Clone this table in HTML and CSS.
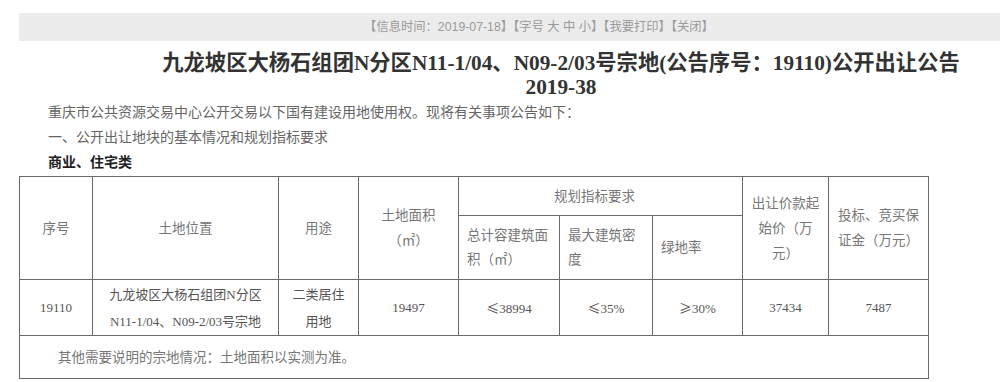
FILE: index.html
```html
<!DOCTYPE html>
<html lang="zh-CN">
<head>
<meta charset="utf-8">
<title>公开出让公告</title>
<link rel="stylesheet" href="styles.css">
</head>
<body>
<div class="page">
  <div class="topbar">【信息时间：2019-07-18】【字号 大 中 小】【我要打印】【关闭】</div>
  <h1 class="title">九龙坡区大杨石组团N分区N11-1/04、N09-2/03号宗地(公告序号：19110)公开出让公告<br>2019-38</h1>
  <p class="para">重庆市公共资源交易中心公开交易以下国有建设用地使用权。现将有关事项公告如下：</p>
  <p class="para">一、公开出让地块的基本情况和规划指标要求</p>
  <p class="para strong">商业、住宅类</p>
  <table class="land">
    <colgroup>
      <col class="c1"><col class="c2"><col class="c3"><col class="c4"><col class="c5"><col class="c6"><col class="c7"><col class="c8"><col class="c9">
    </colgroup>
    <tr class="h1">
      <td rowspan="2">序号</td>
      <td rowspan="2">土地位置</td>
      <td rowspan="2">用途</td>
      <td rowspan="2">土地面积<br>（㎡）</td>
      <td colspan="3" class="plan">规划指标要求</td>
      <td rowspan="2" class="price">出让价款起<br>始价（万<br>元）</td>
      <td rowspan="2" class="deposit">投标、竞买保<br>证金（万元）</td>
    </tr>
    <tr class="h2">
      <td class="left">总计容建筑面<br>积（㎡）</td>
      <td class="left">最大建筑密<br>度</td>
      <td class="left">绿地率</td>
    </tr>
    <tr class="data">
      <td>19110</td>
      <td class="loc">九龙坡区大杨石组团N分区<br>N11-1/04、N09-2/03号宗地</td>
      <td class="use">二类居住<br>用地</td>
      <td>19497</td>
      <td><span class="sym">≤</span>38994</td>
      <td><span class="sym">≤</span>35%</td>
      <td><span class="sym">≥</span>30%</td>
      <td>37434</td>
      <td>7487</td>
    </tr>
    <tr class="note">
      <td colspan="9">其他需要说明的宗地情况：土地面积以实测为准。</td>
    </tr>
  </table>
</div>
</body>
</html>
```

FILE: styles.css
```css
html, body {
  margin: 0;
  padding: 0;
  background: #fff;
}
body {
  font-family: "Liberation Serif", "Noto Sans CJK SC", serif;
  color: #555;
}
.page {
  margin-left: 19px;
  padding-top: 13px;
  width: 981px;
}
.topbar {
  height: 28px;
  line-height: 28px;
  background: #ececec;
  color: #9a9a9a;
  font-family: "Liberation Sans", "Noto Sans CJK SC", sans-serif;
  font-size: 12.3px;
  text-align: center;
  padding-left: 59px;
}
.title {
  margin: 10px 0 0;
  padding-left: 103px;
  text-align: center;
  font-size: 21.3px;
  line-height: 24px;
  font-weight: 700;
  color: #333;
  font-family: "Liberation Serif", "Noto Sans CJK SC", serif;
}
.para {
  margin: 0;
  padding-left: 29px;
  font-size: 14px;
  line-height: 25px;
  color: #666;
  font-family: "Noto Sans CJK SC", sans-serif;
}
.para.strong {
  font-weight: 700;
  color: #222;
}
.land {
  margin-top: 2px;
  border-collapse: collapse;
  table-layout: fixed;
  width: 910px;
  font-size: 13.5px;
  color: #777;
}
.land td {
  border: 1px solid #6a6a6a;
  text-align: center;
  vertical-align: middle;
  padding: 0 4px;
  line-height: 25px;
  white-space: nowrap;
}
.c1 { width: 73px; }
.c2 { width: 186px; }
.c3 { width: 80px; }
.c4 { width: 100px; }
.c5 { width: 101px; }
.c6 { width: 93px; }
.c7 { width: 90px; }
.c8 { width: 86px; }
.c9 { width: 100px; }
.land tr.h1 { height: 39px; }
.land tr.h2 { height: 64px; }
.land tr.data { height: 56px; }
.land tr.note { height: 43px; }
.land td.plan { padding-right: 16px; }
.land td.left {
  text-align: left;
  padding: 0 8px;
  line-height: 24px;
}
.land td.loc {
  line-height: 27px;
  font-size: 13px;
}
.land td.use {
  line-height: 27px;
}
.land tr.data td {
  color: #555;
  font-size: 13px;
}
.sym {
  font-family: "Noto Sans CJK SC", sans-serif;
}
.land tr.note td {
  text-align: left;
  padding-left: 38px;
  font-size: 13.5px;
}
```
